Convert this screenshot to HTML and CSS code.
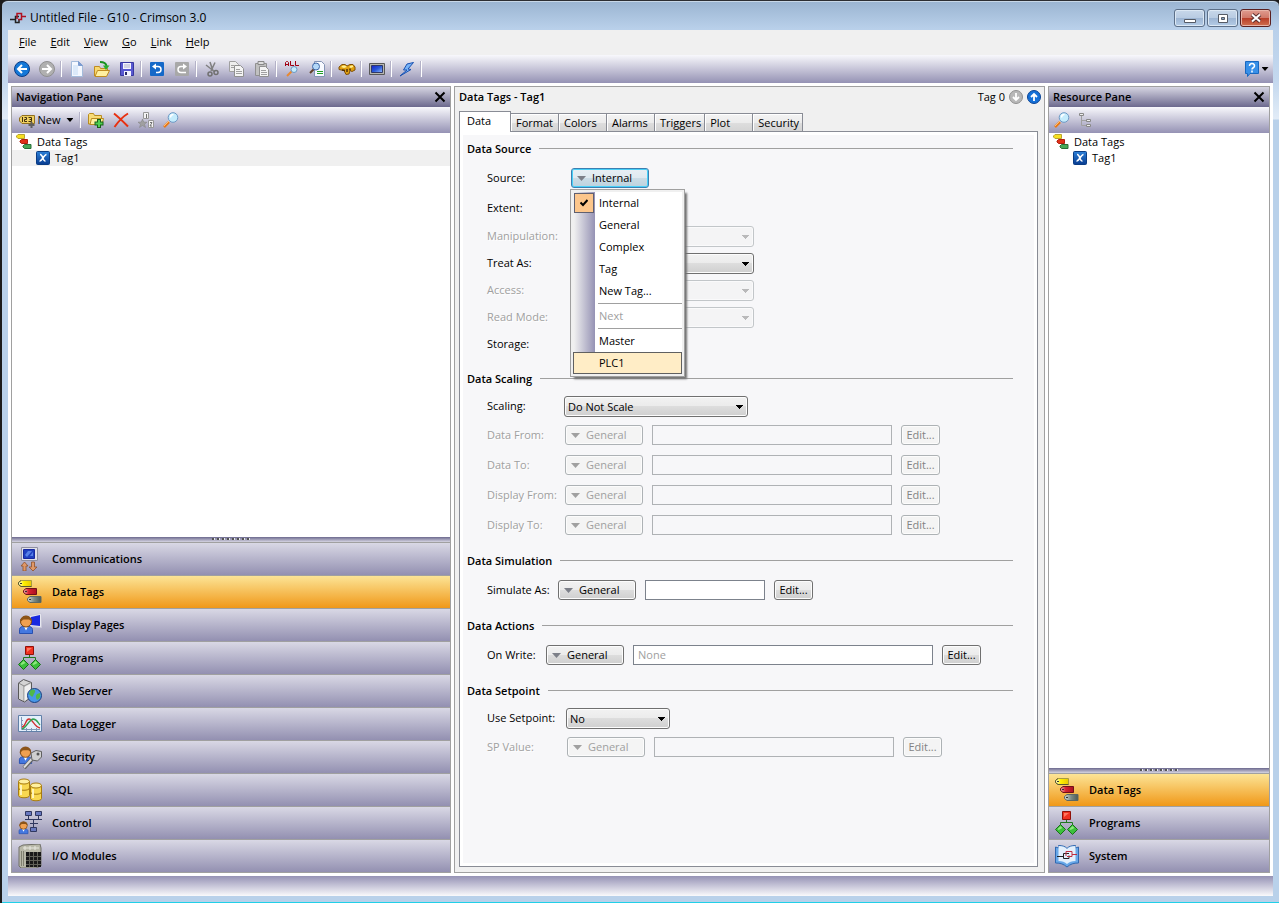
FILE: index.html
```html
<!DOCTYPE html>
<html lang="en">
<head>
    <meta charset="UTF-8">
    <meta name="viewport" content="width=device-width, initial-scale=1.0">
    <title>Untitled File - G10 - Crimson 3.0</title>
    <link rel="stylesheet" href="styles.css">
</head>
<body>

    <!-- icons used more than once -->
    <svg class="sprite" aria-hidden="true">
        <defs>
            <linearGradient id="gYellow"><stop offset="0" stop-color="#fffde0"/><stop offset=".4" stop-color="#fff000"/><stop offset="1" stop-color="#e8c800"/></linearGradient>
            <linearGradient id="gRed"><stop offset="0" stop-color="#f0b0b0"/><stop offset=".4" stop-color="#d82030"/><stop offset="1" stop-color="#a81020"/></linearGradient>
            <linearGradient id="gGrey"><stop offset="0" stop-color="#d0d8d4"/><stop offset=".5" stop-color="#7c8a84"/><stop offset="1" stop-color="#4c5a54"/></linearGradient>
            <linearGradient id="gBlue" x2="0" y2="1"><stop offset="0" stop-color="#2c80d8"/><stop offset="1" stop-color="#083c90"/></linearGradient>
            <linearGradient id="gScreen" x2="1" y2="1"><stop offset="0" stop-color="#1820c8"/><stop offset=".5" stop-color="#2858d8"/><stop offset="1" stop-color="#98c0ff"/></linearGradient>
        </defs>
        <symbol id="tags" viewBox="0 0 24 24">
            <path d="M3 .5h10.500v6H3L.5 4.500v-2z" fill="url(#gYellow)" stroke="#a89c40"/>
            <path d="M3 .5L.5 2.500v2L3 6.500h10.500" fill="none" stroke="#5a5830"/>
            <path d="M8 8.500h10.500v6H8L5.500 12.500v-2z" fill="url(#gRed)" stroke="#701018"/>
            <path d="M12 16.500h11v6H12L9.500 20.500v-2z" fill="url(#gGrey)" stroke="#5c6864"/>
            <path d="M2 3h2v1H2zM7 11h2v1H7zM11 19h2v1h-2z" fill="#333"/>
        </symbol>
        <symbol id="programs" viewBox="0 0 24 24">
            <path d="M11.500 9v3M5.500 15v-3.500h12V15" fill="none" stroke="#207820"/>
            <path d="M7.500.5h8v8h-8z" fill="#f03020" stroke="#901008"/>
            <path d="M9 2h5L9 6z" fill="#ff7860"/>
            <path d="M5.500 13.500l5 5-5 5-5-5zM17.500 13.500l5 5-5 5-5-5z" fill="#3cc03c" stroke="#187018"/>
            <path d="M5.500 15l2 2-4 2-1-1zM17.500 15l2 2-4 2-1-1z" fill="#90e880"/>
        </symbol>
        <symbol id="search" viewBox="0 0 16 16">
            <path d="M1 15l5-5" stroke="#e87818" stroke-width="2.500"/>
            <path d="M1 14l5-5" stroke="#ffc070"/>
            <circle cx="10" cy="5.500" r="4.800" fill="#c4ecfc" stroke="#6c98c4"/>
            <path d="M7.500 5.500a3 3 0 0 1 3-3" fill="none" stroke="#fff" stroke-width="1.500"/>
        </symbol>
        <symbol id="tagtree" viewBox="0 0 16 16">
            <path d="M2 .5h6.500v4H2L.5 3V2z" fill="#f8e020" stroke="#b8a430"/>
            <path d="M5.500 5.500h6v4h-6L4 8V7z" fill="#e03018" stroke="#b02010"/>
            <path d="M8.500 10.500h6.500v4H8.500L7 13v-1z" fill="#48a858" stroke="#287038"/>
        </symbol>
        <symbol id="tagx" viewBox="0 0 14 14">
            <rect x=".5" y=".5" width="13" height="13" rx="1" fill="url(#gBlue)" stroke="#0a3c84"/>
            <path d="M4 3.500c3-.5 2.500 7 5.500 6.500M10.500 3.500C8 3.500 6 10.500 3.500 10" fill="none" stroke="#fff" stroke-width="1.500"/>
        </symbol>
        <symbol id="cross" viewBox="0 0 12 12">
            <path d="M1.500 1.500l9 9M10.500 1.500l-9 9" stroke="#000" stroke-width="2"/>
        </symbol>
        <symbol id="person" viewBox="0 0 16 20">
            <path d="M1.500 19v-4c0-2 2-3 3-3h6c2 0 4 1 4 3v4z" fill="#4478e0" stroke="#2850b0"/>
            <path d="M6 12l2 4 2-4z" fill="#fff"/>
            <circle cx="8" cy="7" r="5.500" fill="#f0a050" stroke="#7a4410"/>
            <path d="M2 8C1 0 14-1 14 7l-3-2-5 0c-2 0-2 2-4 3z" fill="#8c5418"/>
        </symbol>
    </svg>

    <div class="window">
        <header class="titlebar">
            <svg class="app-icon" viewBox="0 0 16 16" width="16" height="16">
                <path d="M0 9.500h5M9 6.500H5.500v6H9V9" fill="none" stroke="#222" stroke-width="1.500"/>
                <path d="M16 6.500h-4M7 9V3.500h4.500v6H8" fill="none" stroke="#b01020" stroke-width="1.500"/>
            </svg>
            <h1 class="title">Untitled File - G10 - Crimson 3.0</h1>
            <div class="caption-buttons">
                <button class="caption" aria-label="Minimize"><svg viewBox="0 0 12 12" width="12" height="12"><path d="M.5 7.500h11v3H.5z" fill="#fff" stroke="#555b66"/></svg></button>
                <button class="caption" aria-label="Restore"><svg viewBox="0 0 12 12" width="12" height="12"><path d="M1.500 2.500h9v8h-9z" fill="#fff" stroke="#555b66"/><path d="M4.500 5.500h3v2h-3z" fill="#8aa4c4" stroke="#555b66"/></svg></button>
                <button class="caption close" aria-label="Close"><svg viewBox="0 0 12 12" width="12" height="12"><path d="M2 2.500l8 7M10 2.500l-8 7" stroke="#5c3030" stroke-width="4"/><path d="M2 2.500l8 7M10 2.500l-8 7" stroke="#fff" stroke-width="2"/></svg></button>
            </div>
        </header>

        <div class="client">
            <nav class="menubar">
                <button><u>F</u>ile</button>
                <button><u>E</u>dit</button>
                <button><u>V</u>iew</button>
                <button><u>G</u>o</button>
                <button><u>L</u>ink</button>
                <button><u>H</u>elp</button>
            </nav>

            <div class="toolbar main-toolbar">
                <button class="tool" aria-label="Back"><svg viewBox="0 0 16 16"><circle cx="8" cy="8" r="7.500" fill="#1478d8" stroke="#0c3c84"/><path d="M13 8H4M8 4L4 8l4 4" fill="none" stroke="#fff" stroke-width="2"/></svg></button>
                <button class="tool" aria-label="Forward"><svg viewBox="0 0 16 16"><circle cx="8" cy="8" r="7.500" fill="#b0b0b0" stroke="#909090"/><path d="M3 8h9M8 4l4 4-4 4" fill="none" stroke="#fff" stroke-width="2"/></svg></button>
                <span class="sep"></span>
                <button class="tool" aria-label="New"><svg viewBox="0 0 16 16"><path d="M2.500.5h7l4 4v11h-11z" fill="#f4f8ff" stroke="#a4bcdc"/><path d="M4 4h5v10H4z" fill="#dceafa"/><path d="M9.500.5v4h4z" fill="#7c9cd0" stroke="#7c9cd0"/></svg></button>
                <button class="tool" aria-label="Open"><svg viewBox="0 0 16 16"><path d="M.5 15V5.500h5l1 2h7V10" fill="#f8d870" stroke="#c08c20"/><path d="M1 15.500l2.500-6h12l-3 6z" fill="#fff0a0" stroke="#c08c20"/><path d="M6 1c4 0 6 1 6.500 4" fill="none" stroke="#189020" stroke-width="2"/><path d="M9 4.500h6.500L12 9z" fill="#28b030"/></svg></button>
                <button class="tool" aria-label="Save"><svg viewBox="0 0 16 16"><path d="M1.500 1.500h13v13h-13z" fill="#5858d0" stroke="#3838a0"/><path d="M4 2h8v6H4zM5 10h7v5H5z" fill="#f4f4ff"/><path d="M5 4h6M5 6h6" stroke="#b0b0c8"/><path d="M6 11h2v3H6z" fill="#282868"/></svg></button>
                <span class="sep"></span>
                <button class="tool" aria-label="Undo"><svg viewBox="0 0 16 16"><rect x="1" y="1" width="14" height="14" rx="1" fill="#1468c8"/><path d="M5 5.500h4c4 0 4 6 0 6H7" fill="none" stroke="#fff" stroke-width="1.500"/><path d="M7 2.500v6l-4-3z" fill="#fff"/></svg></button>
                <button class="tool" aria-label="Redo"><svg viewBox="0 0 16 16"><rect x="1" y="1" width="14" height="14" rx="1" fill="#a8a8a8"/><path d="M11 5.500H7c-4 0-4 6 0 6h5" fill="none" stroke="#fff" stroke-width="1.500"/><path d="M9 2.500v6l4-3z" fill="#fff"/></svg></button>
                <span class="sep"></span>
                <button class="tool" aria-label="Cut"><svg viewBox="0 0 16 16"><path d="M6 1l3 9M11 1.500L7 10M2 4l9 7" stroke="#808080" stroke-width="1.500"/><circle cx="6" cy="13" r="2" fill="none" stroke="#707070" stroke-width="1.500"/><circle cx="12" cy="11.500" r="2" fill="none" stroke="#707070" stroke-width="1.500"/></svg></button>
                <button class="tool" aria-label="Copy"><svg viewBox="0 0 16 16"><path d="M.5.5h6l3 3v7h-9z" fill="#eee" stroke="#a0a0a0"/><path d="M5.500 4.500h6l3 3v8h-9z" fill="#f4f4f4" stroke="#909090"/><path d="M7 8.500h4M7 10.500h6M7 12.500h6M2 4.500h3M2 6.500h3" stroke="#a0a0a0"/></svg></button>
                <button class="tool" aria-label="Paste"><svg viewBox="0 0 16 16"><path d="M1.500 2.500h11v12h-11z" fill="#c0c0c0" stroke="#909090"/><path d="M4 .5h6v3H4z" fill="#ddd" stroke="#888"/><path d="M5.500 5.500h6l3 3v7h-9z" fill="#f4f4f4" stroke="#909090"/><path d="M7 9.500h5M7 11.500h6M7 13.500h6" stroke="#a0a0a0"/></svg></button>
                <span class="sep"></span>
                <button class="tool" aria-label="Find all"><svg viewBox="0 0 16 16"><path d="M1.500 5V1.500l1-1h1l1 1V5M2 3.500h3M6.500 0v4.500H10M11.500 0v4.500H15" fill="none" stroke="#a00010"/><path d="M3 15l5-5" stroke="#e88830" stroke-width="2"/><circle cx="10" cy="8.500" r="3" fill="#c4ecfc" stroke="#6c98c4"/></svg></button>
                <button class="tool" aria-label="Find in file"><svg viewBox="0 0 16 16"><path d="M5.500.5h7l3 3v12h-10z" fill="#f8faff" stroke="#8494b4"/><path d="M8 10.500h6M8 12.500h6" stroke="#20a020"/><path d="M1 12l4-4" stroke="#604028" stroke-width="2"/><circle cx="7" cy="5.500" r="3.500" fill="#b4d8f8" stroke="#4068a8"/></svg></button>
                <span class="sep"></span>
                <button class="tool" aria-label="Find"><svg viewBox="0 0 16 16"><path d="M0 6l3-2.500h3L8 5l3-1.500h3L16 6v3l-3 1.500-2-1-1 3.500-3 .5-2-4-5-1z" fill="#e0a010" stroke="#805008"/><path d="M2 6l2-1.500h2L8 6 5 7zM10 6l2-1.500h2V6l-2 1z" fill="#fff090"/><path d="M3 9l3 .5M11 7.500v2M8 8v3" stroke="#503008" stroke-width="1.500"/></svg></button>
                <span class="sep"></span>
                <button class="tool" aria-label="Full screen"><svg viewBox="0 0 16 16"><path d="M.5 2.500h15v11H.5z" fill="#b8b8b0" stroke="#585858"/><path d="M2.500 4.500h11v7h-11z" fill="url(#gScreen)" stroke="#303868"/></svg></button>
                <span class="sep"></span>
                <button class="tool" aria-label="Download"><svg viewBox="0 0 16 16"><path d="M14.500 1.500L8 3l-3.500 6H8l-7 6 11-6.500-3-.5z" fill="#78b4f8" stroke="#1850b0"/></svg></button>
                <span class="sep"></span>
                <button class="tool help" aria-label="Help"><svg viewBox="0 0 16 16"><path d="M1.500.5h13v12H6L3.500 15.500v-3h-2z" fill="#3890e8" stroke="#1868c0"/><path d="M5.500 5c0-3.500 5-3 5 0 0 2-2.500 1.500-2.500 3.500M8 9.500v2" fill="none" stroke="#fff" stroke-width="1.500"/></svg><i class="arrow"></i></button>
            </div>

            <div class="workspace">
                <aside class="pane nav-pane">
                    <div class="pane-title"><h2>Navigation Pane</h2><button aria-label="Close navigation pane"><svg width="12" height="12"><use href="#cross"/></svg></button></div>
                    <div class="toolbar">
                        <button class="tool new-tag"><svg viewBox="0 0 16 16"><path d="M3 3.500h12.500v8H3L.5 9V6z" fill="#f0d060" stroke="#907020"/><path d="M3.500 5v5M5.500 5.500h2v2h-2v2h2.500M9.500 5.500h3v4h-3M10.500 7.500h2" fill="none" stroke="#403010"/><path d="M12.500 10v6M9.500 13h6" stroke="#606060" stroke-width="2"/></svg><span>New</span><i class="arrow"></i></button>
                        <span class="sep"></span>
                        <button class="tool" aria-label="New folder"><svg viewBox="0 0 16 16"><path d="M.5 12V2.500l1-1h4l1 2h7V12z" fill="#f8dc78" stroke="#b88c20"/><path d="M2 12.500l1.500-6h12l-1.500 6z" fill="#fff0a0" stroke="#b88c20"/><path d="M11 7v9M6.500 11.500h9" stroke="#186018" stroke-width="4"/><path d="M11 8v7M7.500 11.500h7" stroke="#50d050" stroke-width="2"/></svg></button>
                        <button class="tool" aria-label="Delete"><svg viewBox="0 0 16 16"><path d="M1 1.500c4 3 9 8 14 13M15 1.500C9 5 5 10 1.500 15" fill="none" stroke="#e83010" stroke-width="2"/></svg></button>
                        <button class="tool" aria-label="Sort"><svg viewBox="0 0 16 16"><path d="M5.500.5h5v6h-5zM10.500 8.500h5v7h-5z" fill="#f4f4f4" stroke="#989898"/><path d="M8.500 2v4M12 10.500h2l-2 3.500h2" fill="none" stroke="#707070"/><path d="M4.500 7l1.200 3 3.300.2-2.500 2 1 3.300-3-2-3 2 1-3.300L0 10.200l3.300-.2z" fill="#a0a0a0" stroke="#808080" stroke-width=".5"/></svg></button>
                        <button class="tool" aria-label="Search"><svg><use href="#search"/></svg></button>
                    </div>
                    <ul class="tree">
                        <li><svg width="16" height="16"><use href="#tagtree"/></svg>Data Tags</li>
                        <li class="child selected"><svg width="14" height="14"><use href="#tagx"/></svg>Tag1</li>
                    </ul>
                    <div class="splitter"></div>
                    <div class="categories">
                        <button><svg viewBox="0 0 24 24"><path d="M3.500.5h16v13h-16z" fill="#e0e0ea" stroke="#9090a0"/><path d="M5.500 2.500h11v9h-11z" fill="#2040c0" stroke="#1828a0"/><path d="M7 8l3-4h4l-5 6zM12 9l3-4v4z" fill="#5880e8"/><path d="M6.500 15l3.500 4H8v5H5v-5H3zM15 24l-4-4h2.500v-5h3v5H19z" fill="#e09868" stroke="#905028" stroke-width=".8"/></svg>Communications</button>
                        <button class="active"><svg><use href="#tags"/></svg>Data Tags</button>
                        <button><svg viewBox="0 0 24 24"><path d="M11.500 2.500l12-2v14l-12-1z" fill="#e8e8f0" stroke="#c8c8d8"/><path d="M13 4l9-2v11l-9-1z" fill="#1828e0"/><use href="#person" width="16" height="21" y="1"/></svg>Display Pages</button>
                        <button><svg><use href="#programs"/></svg>Programs</button>
                        <button><svg viewBox="0 0 24 24"><path d="M.5 4l5-3.500 8 3V18l-7 5-6-3z" fill="#d4d4d4" stroke="#585858"/><path d="M6 7l7-3.500M6 7v15M6 7L.5 4" stroke="#888"/><path d="M6.500 8l6-3v12l-6 5z" fill="#f0f0f0"/><circle cx="16.500" cy="16.500" r="7" fill="#4898e8" stroke="#184080"/><path d="M12 12c3-3 6-1 5 1s-1 2-2 4-3-1-4-2zM19 15l3-1c1 4-1 6-3 7-1-2-2-4 0-6z" fill="#50b848"/></svg>Web Server</button>
                        <button><svg viewBox="0 0 24 24"><path d="M.5 3.500h23v16H.5z" fill="#e4f0fc" stroke="#6080a8"/><path d="M3.500 5v12.500H22M3 8.500h2M3 12.500h2M8.500 19v-3M13.500 19v-3M18.500 19v-3" fill="none" stroke="#8098b8"/><path d="M4 15c4 0 3-8 7-8s5 8 11 9" fill="none" stroke="#d03030" stroke-width="1.300"/><path d="M4 17c4-1 7-9 11-10 4 0 5 4 7 6" fill="none" stroke="#30a050" stroke-width="1.300"/></svg>Data Logger</button>
                        <button><svg viewBox="0 0 24 24"><use href="#person" width="15" height="20" y="0"/><path d="M6 23l9-10" stroke="#666" stroke-width="4"/><path d="M6 22.500l9-10" stroke="#ddd" stroke-width="2"/><path d="M13 8l5-2.500 5.500 1V12l-4 4-5.500-1z" fill="#d0d0d0" stroke="#606060"/><circle cx="20" cy="9" r="1.500" fill="#555"/></svg>Security</button>
                        <button><svg viewBox="0 0 24 24"><path d="M.5 3.500v14c0 3 11 3 11 0v-14z" fill="#f8d850" stroke="#a87c10"/><ellipse cx="6" cy="3.500" rx="5.500" ry="2.500" fill="#fff0a0" stroke="#a87c10"/><path d="M.5 10c0 3 11 3 11 0" fill="none" stroke="#a87c10"/><path d="M12.500 7.500v13c0 3 11 3 11 0v-13z" fill="#f8d850" stroke="#a87c10"/><ellipse cx="18" cy="7.500" rx="5.500" ry="2.500" fill="#fff0a0" stroke="#a87c10"/><path d="M12.500 14c0 3 11 3 11 0" fill="none" stroke="#a87c10"/><path d="M3 7v10M15 11v9" stroke="#fff4b8" stroke-width="2"/></svg>SQL</button>
                        <button><svg viewBox="0 0 24 24"><path d="M10.500 5v3M20.500 5v3M7 8.500h17M15.500 9v7M12 12.500h8" fill="none" stroke="#303860"/><path d="M7.500.5h6v4h-6zM17.500.5h6v4h-6zM12.500 16.500h6v4h-6z" fill="#6878c0" stroke="#303860"/><use href="#person" width="11" height="15" y="9"/></svg>Control</button>
                        <button><svg viewBox="0 0 24 24"><path d="M1 3l4-2 17-1 1 4v18l-5 2H3l-2-2z" fill="#b8b8a8" stroke="#707068"/><path d="M3.500 7v15M5.500 7v15" stroke="#808070"/><path d="M8 8h15v15H8z" fill="#181818"/><path d="M11.500 8v15M15.500 8v15M19.500 8v15M8 12.500h15M8 16.500h15M8 20.500h15" stroke="#606058"/><path d="M5 4h16M7 2v4M12 2v4M17 2v4" stroke="#e8e8e0"/></svg>I/O Modules</button>
                    </div>
                </aside>

                <main class="editor">
                    <div class="editor-head">
                        <h2>Data Tags - Tag1</h2>
                        <span>Tag 0</span>
                        <button aria-label="Next tag"><svg viewBox="0 0 14 14" width="14" height="14"><circle cx="7" cy="7" r="6.500" fill="#b8b8b8" stroke="#909090"/><path d="M7 3v7M4 7l3 3 3-3" fill="none" stroke="#fff" stroke-width="1.800"/></svg></button>
                        <button aria-label="Previous tag"><svg viewBox="0 0 14 14" width="14" height="14"><circle cx="7" cy="7" r="6.500" fill="#1470d8" stroke="#0c4494"/><path d="M7 11V4M4 7l3-3 3 3" fill="none" stroke="#fff" stroke-width="1.800"/></svg></button>
                    </div>
                    <div class="tabs" role="tablist">
                        <button role="tab" class="current" aria-selected="true">Data</button>
                        <button role="tab">Format</button>
                        <button role="tab">Colors</button>
                        <button role="tab">Alarms</button>
                        <button role="tab">Triggers</button>
                        <button role="tab">Plot</button>
                        <button role="tab">Security</button>
                    </div>

                    <form class="tab-page">
                        <section class="source">
                            <h3>Data Source</h3>
                            <div class="row">
                                <label for="source">Source:</label>
                                <div class="picker">
                                    <button type="button" id="source" class="drop focused" aria-haspopup="menu" aria-expanded="true">Internal</button>
                                    <div class="menu" role="menu">
                                        <button type="button" role="menuitem" class="checked"><svg viewBox="0 0 8 8" width="8" height="8"><path d="M.5 3.500L3 6l4.500-5" fill="none" stroke="#000" stroke-width="2"/></svg>Internal</button>
                                        <button type="button" role="menuitem">General</button>
                                        <button type="button" role="menuitem">Complex</button>
                                        <button type="button" role="menuitem">Tag</button>
                                        <button type="button" role="menuitem">New Tag...</button>
                                        <hr>
                                        <button type="button" role="menuitem" disabled>Next</button>
                                        <hr>
                                        <button type="button" role="menuitem">Master</button>
                                        <button type="button" role="menuitem" class="hot">PLC1</button>
                                    </div>
                                </div>
                            </div>
                            <div class="row">
                                <label for="extent">Extent:</label>
                                <select id="extent" class="short"></select>
                            </div>
                            <div class="row slim off">
                                <label for="manipulation">Manipulation:</label>
                                <select id="manipulation" disabled></select>
                            </div>
                            <div class="row slim">
                                <label for="treat">Treat As:</label>
                                <select id="treat"></select>
                            </div>
                            <div class="row slim off">
                                <label for="access">Access:</label>
                                <select id="access" disabled></select>
                            </div>
                            <div class="row slim off">
                                <label for="readmode">Read Mode:</label>
                                <select id="readmode" disabled></select>
                            </div>
                            <div class="row slim">
                                <label for="storage">Storage:</label>
                                <select id="storage" class="short"></select>
                            </div>
                        </section>

                        <section class="scaling">
                            <h3>Data Scaling</h3>
                            <div class="row slim">
                                <label for="scaling">Scaling:</label>
                                <select id="scaling"><option>Do Not Scale</option></select>
                            </div>
                            <div class="row off">
                                <label for="datafrom">Data From:</label>
                                <button type="button" class="drop" disabled>General</button>
                                <input type="text" id="datafrom" disabled>
                                <button type="button" class="edit" disabled>Edit...</button>
                            </div>
                            <div class="row off">
                                <label for="datato">Data To:</label>
                                <button type="button" class="drop" disabled>General</button>
                                <input type="text" id="datato" disabled>
                                <button type="button" class="edit" disabled>Edit...</button>
                            </div>
                            <div class="row off">
                                <label for="dispfrom">Display From:</label>
                                <button type="button" class="drop" disabled>General</button>
                                <input type="text" id="dispfrom" disabled>
                                <button type="button" class="edit" disabled>Edit...</button>
                            </div>
                            <div class="row off">
                                <label for="dispto">Display To:</label>
                                <button type="button" class="drop" disabled>General</button>
                                <input type="text" id="dispto" disabled>
                                <button type="button" class="edit" disabled>Edit...</button>
                            </div>
                        </section>

                        <section class="simulation">
                            <h3>Data Simulation</h3>
                            <div class="row">
                                <label for="simulate">Simulate As:</label>
                                <button type="button" class="drop">General</button>
                                <input type="text" id="simulate" class="short">
                                <button type="button" class="edit">Edit...</button>
                            </div>
                        </section>

                        <section class="actions">
                            <h3>Data Actions</h3>
                            <div class="row">
                                <label for="onwrite">On Write:</label>
                                <button type="button" class="drop">General</button>
                                <input type="text" id="onwrite" class="long" placeholder="None">
                                <button type="button" class="edit">Edit...</button>
                            </div>
                        </section>

                        <section class="setpoint">
                            <h3>Data Setpoint</h3>
                            <div class="row slim">
                                <label for="setpoint">Use Setpoint:</label>
                                <select id="setpoint" class="short"><option>No</option></select>
                            </div>
                            <div class="row off">
                                <label for="spvalue">SP Value:</label>
                                <button type="button" class="drop" disabled>General</button>
                                <input type="text" id="spvalue" disabled>
                                <button type="button" class="edit" disabled>Edit...</button>
                            </div>
                        </section>
                    </form>
                </main>

                <aside class="pane res-pane">
                    <div class="pane-title"><h2>Resource Pane</h2><button aria-label="Close resource pane"><svg width="12" height="12"><use href="#cross"/></svg></button></div>
                    <div class="toolbar">
                        <button class="tool" aria-label="Search"><svg><use href="#search"/></svg></button>
                        <button class="tool" aria-label="Expand"><svg viewBox="0 0 16 16"><path d="M2.500 4v9.500H7M2.500 8.500H7" fill="none" stroke="#a0a0a0"/><path d="M.5 1.500h4v2h-4zM7.500 7.500h4v2h-4zM7.500 12.500h4v2h-4z" fill="#eee" stroke="#888"/></svg></button>
                    </div>
                    <ul class="tree">
                        <li><svg width="16" height="16"><use href="#tagtree"/></svg>Data Tags</li>
                        <li class="child"><svg width="14" height="14"><use href="#tagx"/></svg>Tag1</li>
                    </ul>
                    <div class="splitter"></div>
                    <div class="categories">
                        <button class="active"><svg><use href="#tags"/></svg>Data Tags</button>
                        <button><svg><use href="#programs"/></svg>Programs</button>
                        <button><svg viewBox="0 0 24 24"><path d="M.5 3l3 1V1.500c4 0 7 1 8.500 3 1.500-2 4.500-3 8.500-3V4l3-1v16c-5 0-8 1-11.500 4C8.500 20 5.500 19 .5 19z" fill="#68a8e8" stroke="#3068b0"/><path d="M3.500 2c4 0 7 1 8.500 3v15c-2-2-5-3-8.500-3zM20.500 2c-4 0-7 1-8.500 3v15c2-2 5-3 8.500-3z" fill="#e4f0fc"/><path d="M2 12.500h6M14 9.500H8.500v5H14v-3" fill="none" stroke="#222"/><path d="M22 10.500h-5M11 12V7.500h6v5h-5" fill="none" stroke="#c03040"/></svg>System</button>
                    </div>
                </aside>
            </div>

            <footer class="statusbar"></footer>
        </div>
    </div>

</body>
</html>
```

FILE: styles.css
```css
* {
    box-sizing: border-box;
}
body {
    margin: 0;
    font-family: "Open Sans", "Noto Sans", sans-serif;
    font-size: 11px;
    line-height: 16px;
    color: #000;
    background: #1c1c1c;
}
h1, h2, h3, ul, hr {
    margin: 0;
    padding: 0;
}
h1, h2, h3 {
    font-size: 11px;
    font-weight: 600;
    line-height: 16px;
}
button, input, select {
    font: inherit;
    color: inherit;
    margin: 0;
}
button {
    padding: 0;
    border: none;
    background: none;
}
.sprite {
    position: absolute;
    width: 0;
    height: 0;
}

/* window frame */
.window {
    display: flex;
    flex-direction: column;
    min-height: 100vh;
    margin-left: 2px;
    padding: 0 6px 6px;
    border-top: 1px solid #2c2e33;
    border-bottom: 1px solid #20d0e8;
    border-radius: 6px 6px 0 0;
    background: linear-gradient(#9ab4d1 0, #b9d0ea 28px, #c4d8ee 80px, #e2ecf7 118px, #b9d1ea 119px);
    box-shadow: inset 0 1px #c8d8e8;
}
.titlebar {
    display: flex;
    align-items: center;
    height: 29px;
    padding: 5px 2px 0;
}
.titlebar .title {
    flex: 1;
    margin-left: 4px;
    font-size: 11px;
    font-size: 12px;
    font-weight: normal;
}
.caption-buttons {
    display: flex;
    gap: 2px;
}
.caption {
    display: flex;
    align-items: center;
    justify-content: center;
    width: 31px;
    height: 18px;
    border: 1px solid #5c6f88;
    border-radius: 3px;
    background: linear-gradient(#c8d8ea 0, #b8cbe2 50%, #9cb4d2 50%, #b4cce6 100%);
    box-shadow: inset 0 0 0 1px #dce8f4;
}
.caption.close {
    border-color: #5a2020;
    background: linear-gradient(#e09c90 0, #d07868 50%, #b83c28 50%, #d07050 100%);
    box-shadow: inset 0 0 0 1px #e8b4a8;
}
.client {
    flex: 1;
    display: flex;
    flex-direction: column;
    background: #fff;
}

/* menu and toolbars */
.menubar {
    display: flex;
    gap: 14px;
    height: 25px;
    padding: 0 0 2px 11px;
    background: #f0f0f0;
}
.toolbar {
    display: flex;
    align-items: center;
    height: 26px;
    background: linear-gradient(#f8f8fc, #9592b4);
}
.main-toolbar {
    height: 28px;
    padding-left: 1px;
}
.tool {
    display: flex;
    align-items: center;
    justify-content: center;
    width: 25px;
    height: 24px;
}
.tool svg {
    flex: none;
    width: 16px;
    height: 16px;
    overflow: visible;
}
.sep {
    width: 1px;
    height: 16px;
    margin: 0 2px;
    background: #fff;
    box-shadow: -1px 0 #b4b2c8;
}
.arrow {
    width: 7px;
    height: 4px;
    background: #000;
    clip-path: polygon(0 0, 100% 0, 50% 100%);
}
.help {
    width: 32px;
    gap: 2px;
    margin-left: auto;
    padding-right: 2px;
}
.new-tag {
    width: 64px;
    gap: 3px;
}
.new-tag .arrow {
    margin-left: 3px;
}

/* workspace */
.workspace {
    flex: 1;
    display: grid;
    grid-template-columns: 440px minmax(0, 1fr) 222px;
    gap: 3px;
    padding: 3px;
}
.pane {
    display: flex;
    flex-direction: column;
    border: 1px solid #a0a0a0;
}
.pane-title {
    display: flex;
    align-items: center;
    justify-content: space-between;
    height: 20px;
    padding: 0 4px;
    background: linear-gradient(#d6d5e2, #6c698e);
}
.pane-title svg, .editor-head svg {
    display: block;
}
.nav-pane > .toolbar {
    padding-left: 2px;
}
.tree {
    flex: 1;
    padding-top: 1px;
    list-style: none;
}
.tree li {
    display: flex;
    align-items: center;
    gap: 5px;
    height: 16px;
    padding-left: 4px;
}
.tree .child {
    padding-left: 24px;
}
.tree .selected {
    background: #f0f0f0;
}
.splitter {
    display: flex;
    justify-content: center;
    height: 5px;
    padding-top: 1px;
    background: linear-gradient(#6c698e, #d6d5e2);
}
.splitter::before {
    content: "";
    width: 38px;
    height: 2px;
    background: repeating-linear-gradient(90deg, #555 0, #555 2px, #e8e8f0 2px, #e8e8f0 3px, transparent 3px, transparent 5px);
}
.categories button {
    display: flex;
    align-items: center;
    gap: 10px;
    width: 100%;
    height: 33px;
    padding-left: 6px;
    border-top: 1px solid #a0a0a0;
    background: linear-gradient(#d9d8e5, #9390b1);
    font-weight: 600;
}
.categories .active {
    background: linear-gradient(#fce496, #f09818);
}
.categories svg {
    width: 24px;
    height: 24px;
}
.statusbar {
    height: 20px;
    background: linear-gradient(#9592b5, #fafafc);
}

/* editor */
.editor {
    display: flex;
    flex-direction: column;
    padding: 0 6px 5px 4px;
    border: 1px solid #a0a0a0;
    background: #f0f0f0;
}
.editor-head {
    display: flex;
    align-items: center;
    gap: 4px;
    height: 20px;
    margin-right: -3px;
}
.editor-head h2 {
    flex: 1;
}
.tabs {
    display: flex;
    align-items: flex-end;
    height: 24px;
}
.tabs button {
    min-width: 48px;
    height: 18px;
    padding: 1px 3px 0 5px;
    border: 1px solid #898c95;
    border-left: none;
    border-bottom: none;
    background: linear-gradient(#f4f4f4 0, #ececec 50%, #dedede 50%, #d4d4d4 100%);
    box-shadow: inset 1px 1px #fff;
    text-align: left;
}
.tabs .current {
    z-index: 1;
    min-width: 52px;
    height: 21px;
    margin-bottom: -1px;
    padding: 0 8px 2px 7px;
    border-left: 1px solid #898c95;
    background: #fff;
}
.tab-page {
    flex: 1;
    padding: 0 21px 12px 4px;
    border: 1px solid #898c95;
    background: #f7f7f9;
    box-shadow: inset 0 0 0 3px #fff;
}
.tab-page section {
    padding: 3px 3px 4px;
}
h3 {
    display: flex;
    align-items: center;
    gap: 8px;
    height: 28px;
}
h3::after {
    content: "";
    flex: 1;
    height: 1px;
    margin-bottom: 2px;
    background: #a0a0a0;
}
.row {
    display: flex;
    align-items: center;
    height: 30px;
    padding-left: 20px;
}
.slim {
    height: 27px;
}
.row label {
    width: 83px;
}
.slim label {
    padding-bottom: 2px;
}
.scaling label {
    width: 77px;
}
.simulation label {
    width: 70px;
}
.actions label {
    width: 58px;
}
.setpoint label {
    width: 79px;
}
.off label {
    color: #a0a0a0;
    text-shadow: 1px 1px #fff;
}
select, .drop, .edit {
    border: 1px solid #707070;
    border-radius: 3px;
    background: linear-gradient(#f2f2f2 0, #ebebeb 50%, #dddddd 50%, #cfcfcf 100%);
    box-shadow: inset 0 0 0 1px #fcfcfc;
}
.row select {
    appearance: none;
    width: 184px;
    height: 21px;
    padding: 0 16px 0 3px;
    background:
        linear-gradient(#000, #000) right 7px top 8px / 1px 4px no-repeat,
        linear-gradient(#000, #000) right 6px top 8px / 3px 3px no-repeat,
        linear-gradient(#000, #000) right 5px top 8px / 5px 2px no-repeat,
        linear-gradient(#000, #000) right 4px top 8px / 7px 1px no-repeat,
        linear-gradient(#f2f2f2 0, #ebebeb 50%, #dddddd 50%, #cfcfcf 100%);
}
.row .short {
    width: 104px;
}
.drop {
    width: 78px;
    height: 20px;
    margin-left: 1px;
    padding-left: 5px;
    text-align: left;
}
.drop::before {
    content: "";
    display: inline-block;
    width: 9px;
    height: 5px;
    margin: 0 6px 1px 0;
    background: #7c7f88;
    clip-path: polygon(0 0, 100% 0, 50% 100%);
}
.drop.focused {
    border-color: #3c7fb1;
    background: linear-gradient(#e8eff4 0, #dfe9f0 50%, #cbdce6 50%, #bcd2de 100%);
    box-shadow: inset 0 0 0 1px #48d0f8;
}
.row input {
    width: 240px;
    height: 20px;
    margin: 0 9px;
    padding: 0 4px 2px;
    border: 1px solid #7c828c;
    background: #fff;
}
.row input.short {
    width: 120px;
}
.row input.long {
    width: 300px;
}
input::placeholder {
    color: #a0a0a0;
}
.edit {
    width: 39px;
    height: 20px;
}
.row input:disabled {
    border-color: #afb2b5;
    background: #f7f7f9;
}
.row select:disabled, .drop:disabled, .edit:disabled {
    border-color: #adb2b5;
    background-color: #f4f4f4;
    background-image: none;
    color: #a0a0a0;
}
.edit:disabled {
    color: #838383;
}
.row select:disabled {
    background-image:
        linear-gradient(#a0a0a0, #a0a0a0),
        linear-gradient(#a0a0a0, #a0a0a0),
        linear-gradient(#a0a0a0, #a0a0a0),
        linear-gradient(#a0a0a0, #a0a0a0),
        linear-gradient(#f4f4f4, #f4f4f4);
}
.drop:disabled::before {
    background: #a0a0a0;
}

/* popup menu under the source button */
.picker {
    position: relative;
}
.menu {
    position: absolute;
    z-index: 5;
    top: 21px;
    left: 0;
    width: 115px;
    padding: 2px;
    border: 1px solid #a0a0a0;
    background: linear-gradient(90deg, #f0f0f0 0, #9592b4 21px, #fff 21px) 3px 2px / 108px 182px no-repeat #f0f0f0;
    box-shadow: 3px 3px 2px -1px #707070;
}
.menu button {
    display: block;
    width: 100%;
    height: 22px;
    padding-left: 25px;
    border: 1px solid transparent;
    text-align: left;
}
.menu button:disabled {
    color: #a0a0a0;
}
.menu .checked {
    display: flex;
    align-items: center;
    gap: 5px;
    padding-left: 0;
}
.menu .checked svg {
    width: 20px;
    height: 20px;
    padding: 5px;
    border: 1px solid #606070;
    background: #fcc68c;
}
.menu .hot {
    border-color: #606060;
    background: #ffedc6;
}
.menu hr {
    height: 3px;
    margin-left: 25px;
    border: none;
    background: linear-gradient(#a0a0a0, #a0a0a0) 0 1px / 100% 1px no-repeat;
}
```
